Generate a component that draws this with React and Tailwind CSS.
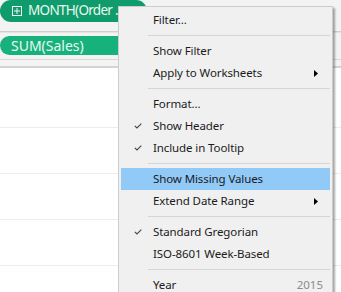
import React from "react";

function Check() {
  return (
    <svg width="8" height="6" viewBox="0 0 8 6" className="block">
      <path d="M0.8 2.8 L3 5 L7.3 0.7" fill="none" stroke="#444" strokeWidth="1.1" />
    </svg>
  );
}

function Arrow() {
  return (
    <svg width="4" height="7" viewBox="0 0 4 7" className="block">
      <path d="M0 0 L4 3.5 L0 7 Z" fill="#000" />
    </svg>
  );
}

function Item({ label, check, arrow, hi, right }) {
  return (
    <div className={`flex h-[22px] items-center ${hi ? "bg-[#91c9f7]" : ""}`}>
      <div className="flex w-[32px] shrink-0 items-center justify-center pl-[2px]">
        {check ? <Check /> : null}
      </div>
      <div className="flex-1 text-[11.5px] tracking-[-0.1px] text-[#1b1b1b] leading-none">{label}</div>
      {arrow ? (
        <div className="pr-[12px]">
          <Arrow />
        </div>
      ) : null}
      {right ? (
        <div className="pr-[7px] text-[11.5px] text-[#8c8c8c] leading-none">{right}</div>
      ) : null}
    </div>
  );
}

function Sep() {
  return (
    <div className="flex h-[9px] items-center pl-[27px]">
      <div className="h-px w-full bg-[#d5d5d5]" />
    </div>
  );
}

export default function App() {
  return (
    <div
      className="relative h-[292px] w-[341px] overflow-hidden bg-white"
      style={{ fontFamily: '"Noto Sans", "Open Sans", sans-serif' }}
    >
      {/* background shelves */}
      <div className="flex h-[31px] items-start bg-[#f3f3f3]">
        <div className="flex h-[22px] w-[147px] items-center gap-[6px] rounded-full bg-[#0f9b6b] pl-[12px] text-[13.5px] text-[#eafaf2]">
          <span className="flex h-[10px] w-[10px] items-center justify-center border border-[#eafaf2] text-[10px] leading-none">
            <svg width="6" height="6" viewBox="0 0 6 6">
              <path d="M3 0 V6 M0 3 H6" stroke="#eafaf2" strokeWidth="1" />
            </svg>
          </span>
          <span className="leading-none tracking-[-0.7px]">MONTH(Order ...</span>
        </div>
      </div>
      <div className="h-px bg-[#cfcfcf]" />
      <div className="h-px bg-[#e4e4e4]" />
      <div className="h-[3px] bg-[#f3f3f3]" />
      <div className="flex h-[23px] items-start bg-[#f3f3f3]">
        <div className="flex h-[19px] w-[150px] items-center rounded-full bg-[#17b17c] pl-[11px] text-[14px] text-[#eafaf2]">
          <span className="leading-none">SUM(Sales)</span>
        </div>
      </div>
      <div className="h-px bg-[#d8d8d8]" />
      <div className="h-[6px] bg-[#f3f3f3]" />
      <div className="h-[2px] bg-[#d4d4d4]" />
      <div className="h-[60px] border-b border-[#ececec]" />
      <div className="h-[46px] border-b border-[#ececec]" />
      <div className="h-[46px] border-b border-[#ececec]" />
      <div className="h-[46px] border-b border-[#ececec]" />

      {/* context menu */}
      <div className="absolute left-[118px] top-[6px] w-[215px] border border-[#cccccc] bg-[#f0f0f0] px-[2px] py-[2px] shadow-[2px_2px_2px_rgba(0,0,0,0.35)]">
        <Item label="Filter..." />
        <Sep />
        <Item label="Show Filter" />
        <Item label="Apply to Worksheets" arrow />
        <Sep />
        <Item label="Format..." />
        <Item label="Show Header" check />
        <Item label="Include in Tooltip" check />
        <Sep />
        <Item label="Show Missing Values" hi />
        <Item label="Extend Date Range" arrow />
        <Sep />
        <Item label="Standard Gregorian" check />
        <Item label="ISO-8601 Week-Based" />
        <Sep />
        <Item label="Year" right="2015" />
      </div>
    </div>
  );
}
